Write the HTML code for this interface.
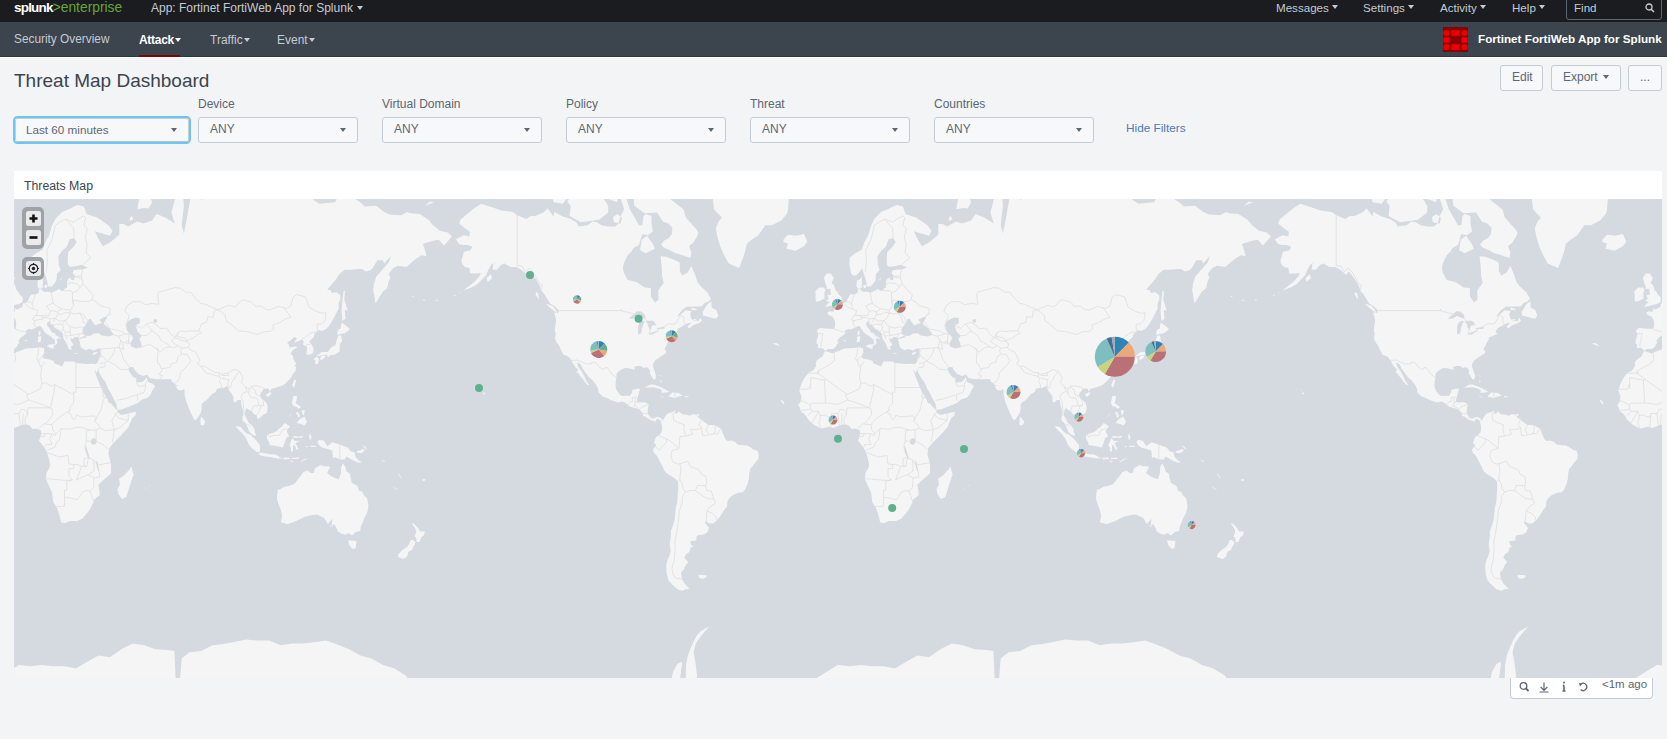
<!DOCTYPE html>
<html><head><meta charset="utf-8">
<style>
*{box-sizing:border-box}
html,body{margin:0;padding:0;width:1667px;height:739px;overflow:hidden;background:#f2f4f5;font-family:"Liberation Sans",sans-serif}
.a{position:absolute;white-space:nowrap;line-height:1}
#top{position:absolute;left:0;top:0;width:1667px;height:22px;background:#1a1c20}
#nav{position:absolute;left:0;top:22px;width:1667px;height:35px;background:#3c444d;border-bottom:1px solid #30363d}
#navw{position:absolute;left:0;top:57px;width:1667px;height:1px;background:#fff}
.tri{display:inline-block;width:0;height:0;border-left:3.5px solid transparent;border-right:3.5px solid transparent;border-top:4.5px solid currentColor;vertical-align:middle}
.dd{position:absolute;top:117px;width:160px;height:26px;border:1px solid #c3cbd4;border-radius:3px;background:#f7f8fa;color:#5c6773;font-size:12px}
.dd span{position:absolute;left:11px;top:5px;line-height:1}
.dd i{position:absolute;right:11px;top:10px;width:0;height:0;border-left:3.5px solid transparent;border-right:3.5px solid transparent;border-top:4.5px solid #5c6773}
.lbl{position:absolute;top:98px;font-size:12px;color:#5c6773;line-height:1}
.btn{position:absolute;top:65px;height:26px;border:1px solid #c3cbd4;border-radius:3px;background:#f7f8fa;color:#5c6773;font-size:12px}
.btn span{position:absolute;top:5px;line-height:1}
#panel{position:absolute;left:14px;top:171px;width:1648px;height:28px;background:#fff}
#map{position:absolute;left:14px;top:199px;width:1648px;height:479px;overflow:hidden;background:#d5dae0}
.ctl{position:absolute;left:8px;width:22px;background:#9fa3a7;border-radius:5px}
.cb{position:absolute;left:4px;width:15px;height:15px;background:#ebebeb;border-radius:2.5px}
</style></head><body>
<div id="top"></div>
<div id="nav"></div><div id="navw"></div>
<div id="panel"></div>
<div class="a" style="left:14px;top:1px;font-size:13.5px;font-weight:bold;color:#fff;letter-spacing:-0.8px">splunk<span style="font-size:13.8px;color:#65a637;font-weight:normal;letter-spacing:0px">&gt;enterprise</span></div>
<div class="a" style="left:151px;top:2px;font-size:12px;color:#c3cbd4">App: Fortinet FortiWeb App for Splunk <span class="tri" style="margin-left:1px;margin-top:-2px"></span></div>
<div class="a" style="left:1276px;top:1.5px;font-size:11.6px;color:#c3cbd4">Messages <span class="tri" style="margin-top:-2px"></span></div>
<div class="a" style="left:1363px;top:1.5px;font-size:11.6px;color:#c3cbd4">Settings <span class="tri" style="margin-top:-2px"></span></div>
<div class="a" style="left:1440px;top:1.5px;font-size:11.6px;color:#c3cbd4">Activity <span class="tri" style="margin-top:-2px"></span></div>
<div class="a" style="left:1512px;top:1.5px;font-size:11.6px;color:#c3cbd4">Help <span class="tri" style="margin-top:-2px"></span></div>
<div style="position:absolute;left:1566px;top:-6px;width:96px;height:26px;border:1px solid #5c6773;border-radius:3px"></div>
<div class="a" style="left:1574px;top:1.5px;font-size:11.6px;color:#c3cbd4">Find</div>
<svg style="position:absolute;left:1645px;top:3px" width="10" height="10" viewBox="0 0 10 10"><circle cx="4" cy="4" r="3" fill="none" stroke="#c3cbd4" stroke-width="1.3"/><path d="M6.2,6.2L9,9" stroke="#c3cbd4" stroke-width="1.5"/></svg>
<div class="a" style="left:14px;top:34px;font-size:11.85px;color:#c3cbd4">Security Overview</div>
<div class="a" style="left:139px;top:34px;font-size:12px;font-weight:bold;color:#fff;letter-spacing:-0.3px">Attack<span class="tri" style="margin-left:1px;margin-top:-2px"></span></div>
<div style="position:absolute;left:139px;top:55px;width:41px;height:2px;background:#850000"></div>
<div class="a" style="left:210px;top:34px;font-size:12px;color:#c3cbd4">Traffic<span class="tri" style="margin-left:1px;margin-top:-2px"></span></div>
<div class="a" style="left:277px;top:34px;font-size:12px;color:#c3cbd4">Event<span class="tri" style="margin-left:1px;margin-top:-2px"></span></div>
<svg style="position:absolute;left:1443px;top:27px" width="25" height="25" viewBox="0 0 25 25"><rect width="25" height="25" fill="#8a0000"/>
<g fill="#ee0000"><rect x="0.3" y="3.2" width="6" height="5.6" rx="2"/><rect x="8.3" y="3.2" width="8.4" height="5.6"/><rect x="18.5" y="3.2" width="6.2" height="5.6" rx="2"/>
<rect x="0.3" y="10.2" width="6" height="5.6"/><rect x="18.5" y="10.2" width="6.2" height="5.6"/>
<rect x="0.3" y="17.3" width="6" height="5.6" rx="2"/><rect x="8.3" y="17.3" width="8.4" height="5.6"/><rect x="18.5" y="17.3" width="6.2" height="5.6" rx="2"/></g></svg>
<div class="a" style="left:1478px;top:33px;font-size:11.7px;font-weight:bold;color:#fff">Fortinet FortiWeb App for Splunk</div>
<div class="a" style="left:14px;top:71px;font-size:19px;color:#3c444d">Threat Map Dashboard</div>
<div class="btn" style="left:1500px;width:43px"><span style="left:11px">Edit</span></div>
<div class="btn" style="left:1551px;width:70px"><span style="left:11px">Export</span><i style="position:absolute;left:51px;top:9px;width:0;height:0;border-left:3.5px solid transparent;border-right:3.5px solid transparent;border-top:4.5px solid #5c6773"></i></div>
<div class="btn" style="left:1628px;width:34px"><span style="left:11px">...</span></div>
<div style="position:absolute;left:13px;top:115.5px;width:178px;height:28.5px;border:2px solid #6cc6f5;border-radius:4.5px;background:#f7f8fa"><div style="position:absolute;left:0;top:0;right:0;bottom:0;border:1px solid #c8ced6;border-bottom-color:#b9c0c8;border-radius:2.5px"></div></div>
<div class="a" style="left:26px;top:123.5px;font-size:11.7px;color:#5c6773">Last 60 minutes</div>
<i style="position:absolute;left:171px;top:128px;width:0;height:0;border-left:3.5px solid transparent;border-right:3.5px solid transparent;border-top:4.5px solid #5c6773"></i>
<div class="lbl" style="left:198px">Device</div><div class="dd" style="left:198px"><span>ANY</span><i></i></div>
<div class="lbl" style="left:382px">Virtual Domain</div><div class="dd" style="left:382px"><span>ANY</span><i></i></div>
<div class="lbl" style="left:566px">Policy</div><div class="dd" style="left:566px"><span>ANY</span><i></i></div>
<div class="lbl" style="left:750px">Threat</div><div class="dd" style="left:750px"><span>ANY</span><i></i></div>
<div class="lbl" style="left:934px">Countries</div><div class="dd" style="left:934px"><span>ANY</span><i></i></div>
<div class="a" style="left:1126px;top:123px;font-size:11.8px;color:#4e7bb0">Hide Filters</div>
<div class="a" style="left:24px;top:180px;font-size:12.3px;color:#3c444d">Threats Map</div>

<div id="map">
<svg width="1648" height="479" viewBox="0 0 1648 479">
<defs><g id="w"><path d="M-379.9,-144.6 -376.5,-147.3 -378.8,-146.1ZM-146.3,-128.9 -140.6,-128.6 -142.2,-130.0 -146.7,-131.4ZM-147.4,-181.1 -151.3,-182.0 -157.0,-184.0 -162.7,-185.5 -167.9,-188.5 -174.0,-191.1 -177.0,-194.2 -174.0,-198.0 -169.0,-200.7 -166.1,-204.7 -165.6,-211.1 -169.5,-215.3 -175.2,-217.2 -180.9,-226.2 -193.4,-225.5 -203.6,-233.0 -204.8,-243.9 -191.1,-254.1 -175.2,-246.2 -163.8,-236.6 -154.7,-229.6 -153.6,-226.2 -152.4,-221.6 -141.0,-208.7 -139.5,-205.8 -140.6,-203.0 -144.5,-196.4 -149.0,-192.6 -146.7,-187.0ZM-177.4,-58.3 -176.5,-59.0 -177.0,-55.8 -177.9,-57.0ZM-177.0,-63.3 -175.2,-62.6 -179.3,-62.8ZM-284.4,-236.6 -275.3,-235.1 -268.4,-243.9 -273.0,-258.3 -284.4,-255.8 -286.6,-243.9ZM-193.3,-51.0 -187.5,-54.2 -184.7,-54.3 -178.6,-52.3 -172.2,-49.1 -168.6,-46.9 -172.4,-46.3 -176.8,-46.0 -176.1,-48.2 -178.6,-50.1 -184.3,-51.6 -188.8,-51.3 -193.1,-51.1ZM-99.0,-170.8 -109.2,-175.3 -113.8,-183.5 -117.6,-192.1 -120.6,-201.8 -122.2,-210.5 -119.4,-217.2 -116.0,-221.0 -124.0,-229.6 -125.1,-240.2 -129.7,-260.0 -136.5,-273.4 -154.7,-278.2 -163.8,-293.6 -147.9,-324.3 -125.1,-346.8 -91.0,-373.9 -56.9,-373.9 -34.1,-338.8 -40.9,-293.6 -45.5,-264.3 -48.9,-243.9 -49.6,-235.1 -50.0,-228.9 -51.2,-224.9 -56.9,-218.4 -66.0,-213.5 -72.8,-213.5 -79.6,-203.5 -86.5,-199.1 -91.0,-195.3 -93.3,-186.0 -96.7,-176.3ZM-354.9,-46.9 -352.6,-45.2 -354.0,-43.8 -354.9,-45.7ZM-169.5,-42.6 -165.6,-46.2 -159.2,-45.7 -155.4,-43.1 -160.4,-42.1 -163.3,-40.9 -169.0,-42.1ZM-54.6,-199.1 -50.0,-204.1 -42.1,-203.0 -34.1,-204.7 -30.7,-197.4 -34.1,-192.6 -42.5,-188.0 -51.6,-190.0 -50.0,-195.3 -54.6,-196.9ZM-178.1,-42.6 -173.4,-41.9 -174.7,-41.2 -177.9,-42.1ZM-224.1,-216.6 -217.3,-215.3 -216.1,-221.0 -220.7,-224.9 -225.2,-221.6ZM-350.3,-156.9 -345.8,-160.7 -347.4,-164.6 -351.5,-160.7ZM-356.7,-235.1 -345.8,-231.6 -336.7,-228.2 -325.3,-226.9 -320.8,-223.6 -311.7,-219.7 -307.1,-222.9 -302.6,-222.9 -294.6,-226.2 -290.3,-230.3 -284.4,-222.3 -283.7,-226.9 -275.3,-222.3 -267.3,-219.7 -261.6,-216.6 -259.3,-212.3 -250.2,-213.5 -245.7,-217.2 -241.1,-216.6 -236.6,-213.5 -229.8,-212.3 -222.9,-212.3 -219.5,-215.3 -217.3,-222.9 -213.8,-229.6 -217.3,-240.2 -211.6,-240.2 -208.2,-229.6 -202.5,-219.7 -199.1,-213.5 -195.7,-213.5 -194.5,-222.9 -192.2,-224.9 -186.5,-222.9 -186.5,-214.7 -185.0,-207.6 -190.0,-203.5 -195.7,-204.7 -199.1,-193.7 -204.8,-190.6 -206.3,-187.5 -210.4,-183.5 -213.8,-176.3 -215.2,-171.7 -214.3,-166.3 -210.4,-159.0 -201.3,-156.5 -193.4,-151.2 -187.2,-150.8 -187.0,-142.3 -183.1,-136.4 -179.5,-139.0 -179.7,-148.5 -174.3,-155.7 -175.9,-162.8 -176.3,-171.7 -177.4,-182.5 -172.0,-182.0 -163.8,-179.1 -158.3,-176.3 -158.1,-167.2 -155.6,-163.3 -150.2,-166.3 -146.7,-173.0 -143.3,-165.0 -140.4,-156.5 -137.0,-152.4 -130.8,-146.5 -126.9,-140.1 -129.7,-137.1 -133.1,-136.0 -136.5,-132.4 -144.5,-132.4 -151.3,-132.1 -155.8,-128.9 -161.1,-122.1 -158.1,-123.4 -152.4,-128.6 -146.3,-127.9 -147.9,-124.8 -147.0,-121.4 -145.6,-118.8 -139.9,-117.2 -137.6,-121.1 -136.0,-118.1 -138.8,-115.9 -144.7,-113.6 -149.0,-110.4 -150.6,-112.3 -146.7,-115.9 -150.2,-115.5 -152.7,-114.2 -157.0,-111.7 -159.7,-110.4 -160.8,-108.2 -161.3,-106.4 -159.2,-104.9 -162.0,-103.9 -163.8,-103.0 -168.3,-101.2 -168.3,-98.9 -170.4,-96.2 -171.1,-94.2 -172.7,-91.3 -173.6,-90.4 -172.0,-87.6 -171.8,-85.7 -174.0,-84.3 -177.2,-82.3 -180.2,-80.2 -183.1,-78.0 -184.7,-75.6 -185.2,-72.7 -183.4,-67.4 -182.0,-63.3 -182.2,-60.8 -183.1,-59.3 -184.5,-59.5 -186.1,-61.8 -188.1,-65.4 -188.1,-68.5 -190.4,-71.3 -192.2,-71.6 -194.3,-70.8 -196.8,-72.7 -200.2,-72.9 -203.8,-72.1 -202.9,-69.2 -205.9,-69.5 -209.3,-70.6 -213.4,-70.8 -215.7,-69.8 -219.5,-67.2 -221.4,-65.1 -221.6,-61.3 -222.3,-57.5 -222.5,-52.1 -221.4,-48.9 -218.6,-44.5 -215.7,-42.8 -210.4,-43.1 -208.2,-42.8 -205.9,-46.0 -205.7,-48.9 -201.3,-50.1 -197.9,-50.1 -198.8,-47.2 -199.5,-44.0 -200.7,-40.4 -201.3,-37.4 -199.1,-36.4 -195.7,-36.6 -192.2,-36.4 -189.3,-34.5 -190.0,-31.0 -190.4,-26.6 -190.2,-24.9 -187.7,-21.7 -185.4,-20.1 -183.1,-21.0 -180.9,-21.9 -178.6,-21.5 -176.1,-19.9 -176.3,-17.1 -178.4,-18.9 -180.9,-20.3 -182.7,-17.1 -185.4,-18.3 -188.8,-18.9 -190.4,-20.6 -192.7,-22.4 -195.2,-22.9 -195.0,-25.4 -196.8,-27.5 -199.3,-29.8 -201.3,-30.3 -204.3,-31.0 -208.2,-32.2 -210.0,-33.6 -212.7,-36.4 -216.1,-37.4 -219.5,-36.2 -222.9,-37.4 -227.3,-38.8 -230.9,-40.9 -235.5,-42.4 -239.6,-46.5 -240.0,-50.1 -242.1,-54.3 -245.7,-58.8 -248.9,-61.3 -252.1,-65.9 -255.5,-70.3 -257.5,-74.8 -260.9,-76.4 -259.8,-72.1 -256.6,-67.7 -253.7,-62.6 -251.4,-57.5 -248.9,-54.3 -250.2,-53.5 -253.7,-57.5 -255.3,-60.0 -258.2,-63.3 -259.8,-65.9 -261.6,-66.4 -260.0,-69.0 -263.4,-72.7 -265.5,-76.4 -266.4,-78.3 -269.4,-82.1 -271.9,-83.4 -274.4,-84.0 -277.3,-89.3 -278.7,-93.0 -281.4,-96.2 -283.0,-100.6 -282.3,-105.5 -283.2,-108.6 -281.9,-118.8 -283.7,-126.2 -279.8,-125.8 -279.4,-128.2 -280.5,-130.0 -283.9,-132.8 -287.8,-135.3 -290.7,-139.7 -293.5,-144.6 -296.4,-147.7 -298.0,-152.4 -301.4,-158.6 -305.3,-163.7 -308.3,-167.2 -311.0,-163.7 -313.9,-166.7 -317.8,-169.9 -321.9,-171.7 -327.6,-171.7 -333.3,-175.3 -336.7,-174.0 -341.2,-169.0 -345.3,-169.4 -344.7,-174.9 -341.2,-177.2 -346.9,-174.0 -349.9,-168.5 -351.5,-164.1 -356.0,-159.4 -360.6,-154.5 -366.3,-151.2 -372.0,-149.3 -374.9,-148.1 -369.7,-152.4 -364.0,-156.5 -358.3,-162.8 -357.2,-165.9 -361.7,-165.4 -367.9,-165.4 -368.6,-170.8 -373.1,-171.7 -375.8,-174.9 -376.5,-178.6 -374.9,-183.5 -374.2,-187.0 -367.4,-188.5 -365.8,-192.1 -370.4,-193.7 -375.4,-193.7 -378.8,-194.8 -382.2,-199.6 -374.2,-203.5 -368.6,-202.4 -368.1,-207.0 -373.1,-210.5 -378.8,-215.3 -377.6,-219.1 -370.8,-224.9 -364.0,-230.3ZM-134.9,-123.4 -126.3,-121.1 -121.9,-120.1 -119.7,-123.1 -121.7,-128.9 -126.3,-131.0 -126.7,-137.5 -130.8,-134.2 -135.4,-126.9ZM-146.5,-120.1 -141.0,-118.1 -142.2,-119.8ZM-230.9,-240.2 -220.7,-236.6 -219.5,-247.8 -225.2,-255.8 -232.0,-249.3ZM-152.9,-42.8 -149.2,-42.6 -149.7,-41.6 -152.9,-41.6ZM-299.2,-139.0 -302.6,-144.6 -301.4,-146.9 -299.6,-145.0ZM-217.3,-242.4 -207.0,-243.9 -205.9,-255.8 -216.1,-255.8ZM-183.1,-190.0 -192.2,-185.5 -197.9,-188.5 -196.3,-199.1 -191.1,-203.0 -185.4,-195.3ZM-280.5,-125.8 -284.4,-128.2 -292.1,-134.6 -290.1,-134.6 -285.5,-132.8 -282.1,-128.9ZM-229.8,-226.2 -238.9,-219.1 -257.1,-216.6 -268.4,-222.9 -267.3,-233.0 -270.7,-237.3 -261.6,-250.1 -245.7,-247.8 -236.6,-243.9 -229.8,-233.0ZM406.1,-233.0 415.2,-236.6 410.6,-237.3ZM-13.4,-87.3 -15.5,-82.3 -17.3,-81.2 -21.2,-78.3 -22.3,-75.6 -21.8,-72.7 -25.0,-68.2 -29.3,-66.1 -33.0,-61.5 -36.4,-55.5 -38.7,-48.4 -36.4,-41.9 -37.5,-36.9 -39.8,-33.8 -38.2,-31.0 -38.0,-28.2 -34.1,-25.2 -31.2,-21.7 -30.0,-19.4 -26.2,-15.7 -24.6,-14.4 -17.1,-10.0 -9.1,-12.1 -4.5,-10.9 -0.5,-12.5 2.7,-13.9 7.7,-14.6 11.4,-12.8 13.6,-9.8 17.1,-10.2 20.5,-9.1 21.6,-8.9 22.3,-5.7 21.2,-0.9 19.8,1.6 23.9,6.8 26.8,10.9 28.0,13.7 30.0,20.1 31.2,26.3 30.5,28.9 27.3,34.5 27.5,35.0 26.8,40.0 29.6,46.5 33.0,53.5 34.4,63.8 37.5,67.9 39.8,74.2 41.2,79.1 42.1,83.4 45.5,84.5 51.2,82.3 58.2,82.3 63.5,79.6 70.5,71.3 74.4,63.8 74.8,61.3 80.8,56.3 80.3,51.3 79.2,46.0 84.2,41.4 92.1,34.5 92.1,25.2 89.4,15.5 90.3,9.1 94.4,4.1 103.1,-4.6 109.2,-11.4 113.3,-20.6 116.7,-23.8 116.7,-27.0 102.4,-23.8 98.3,-26.6 98.5,-28.9 92.1,-35.2 89.9,-35.9 87.6,-41.6 84.6,-45.5 81.9,-51.3 79.9,-56.5 77.3,-62.8 76.9,-64.6 74.2,-71.3 73.5,-75.0 68.0,-74.8 56.9,-75.8 54.6,-77.2 45.5,-77.2 43.2,-72.4 35.3,-75.6 34.6,-78.0 30.0,-79.3 25.0,-80.4 23.0,-82.1 25.3,-85.7 25.0,-91.0 23.2,-90.2 22.5,-91.6 15.9,-90.7 6.8,-90.2 -1.4,-87.0 -5.0,-85.4 -12.1,-87.6ZM-35.9,-66.7 -35.0,-66.4 -35.5,-65.9ZM-139.5,136.0 -131.9,136.4 -131.3,138.2 -135.4,140.1 -139.2,139.0ZM112.2,27.5 114.7,35.7 113.3,39.3 110.6,47.7 107.2,58.5 102.8,60.3 99.4,55.0 98.5,50.1 101.0,46.0 100.1,40.0 105.3,36.4 109.0,32.2 110.6,30.8ZM-176.1,-19.6 -174.7,-18.7 -173.4,-21.5 -171.8,-23.8 -170.2,-25.2 -168.8,-25.9 -166.1,-26.6 -164.3,-27.5 -162.2,-28.4 -162.9,-26.3 -162.9,-24.9 -161.3,-25.6 -159.7,-26.3 -159.2,-28.0 -158.1,-26.3 -155.4,-24.3 -152.4,-24.3 -147.9,-23.1 -145.6,-24.5 -141.7,-24.3 -140.8,-22.9 -138.8,-20.6 -136.5,-19.4 -134.2,-17.1 -131.9,-15.5 -129.7,-13.7 -125.1,-13.7 -121.7,-12.8 -118.3,-10.7 -116.5,-9.6 -114.9,-4.6 -113.8,-2.3 -112.6,0.5 -110.3,2.3 -106.9,1.6 -102.4,3.4 -100.6,5.7 -95.5,6.4 -91.0,6.6 -87.6,8.4 -84.2,10.9 -80.3,12.1 -79.2,16.4 -79.9,20.6 -83.0,24.0 -85.3,27.5 -87.6,29.8 -88.7,34.5 -89.2,40.4 -90.5,45.2 -92.8,50.8 -95.5,53.8 -98.3,53.8 -101.7,54.8 -105.8,56.8 -109.2,60.0 -110.6,62.6 -111.0,67.7 -113.8,71.1 -116.0,74.8 -119.4,79.6 -121.7,82.3 -124.9,84.8 -127.9,84.8 -130.8,83.4 -132.9,82.3 -132.9,84.3 -130.1,87.6 -129.0,89.3 -130.8,93.6 -134.2,95.6 -139.9,96.2 -141.5,98.0 -141.7,101.8 -147.9,102.4 -146.7,106.4 -144.7,107.6 -147.4,108.6 -148.6,113.3 -152.0,115.5 -153.8,118.8 -149.7,123.1 -152.4,126.5 -154.2,131.0 -157.0,133.5 -156.1,140.1 -153.6,144.6 -148.3,150.1 -152.4,150.5 -155.8,152.0 -160.4,150.5 -164.9,146.5 -169.5,141.6 -171.3,135.3 -171.8,126.5 -170.6,121.4 -168.3,116.5 -167.2,111.7 -168.3,107.0 -167.9,102.4 -167.2,98.0 -167.2,92.1 -164.9,86.5 -163.3,81.0 -162.7,74.2 -162.2,69.0 -160.6,62.6 -160.2,55.3 -159.7,48.9 -159.9,42.8 -162.7,40.0 -166.1,37.8 -170.6,35.0 -173.6,31.9 -175.6,27.5 -178.6,21.7 -180.9,17.1 -184.3,13.7 -185.0,10.7 -182.7,7.7 -182.0,5.5 -184.0,4.6 -183.1,1.1 -182.0,-1.8 -179.5,-3.4 -177.0,-5.9 -175.9,-9.1 -176.1,-13.7 -177.0,-16.4ZM-140.8,-24.7 -138.5,-24.7 -138.8,-23.1 -140.8,-23.1ZM19.6,-103.6 19.8,-107.3 21.4,-108.6 21.6,-105.5 20.9,-103.6ZM53.5,-85.9 59.8,-85.7 56.9,-85.1 53.7,-85.7ZM73.5,-84.5 74.8,-86.2 78.7,-87.0 77.3,-85.1 75.1,-84.0ZM89.4,-213.5 78.5,-221.0 67.6,-224.9 64.8,-232.3 58.7,-233.7 53.5,-231.6 49.8,-229.6 43.0,-226.9 36.4,-219.7 33.4,-214.1 30.0,-203.0 26.2,-196.4 23.7,-189.0 17.1,-185.5 11.6,-181.1 11.4,-174.0 13.0,-165.9 14.8,-163.3 18.2,-163.3 21.6,-166.7 24.1,-170.8 25.0,-167.2 27.1,-161.5 28.4,-156.5 29.3,-152.4 32.5,-152.4 35.5,-155.3 37.5,-158.6 38.0,-165.0 41.6,-168.5 39.8,-174.4 39.4,-182.5 43.2,-188.0 47.8,-192.1 50.5,-199.6 55.1,-200.7 57.8,-196.9 54.6,-192.1 49.1,-186.5 48.7,-178.6 48.9,-174.4 50.7,-172.1 56.9,-172.6 62.6,-174.0 68.9,-171.2 63.7,-169.4 59.1,-169.4 54.6,-168.5 53.5,-165.4 55.5,-164.1 55.3,-159.4 54.8,-158.6 52.3,-159.0 51.4,-161.5 48.9,-159.8 47.8,-155.3 48.0,-153.3 48.2,-151.2 45.5,-150.1 44.6,-148.1 42.5,-148.1 39.8,-149.7 36.4,-147.7 32.3,-146.1 28.0,-147.3 25.0,-146.5 24.8,-148.1 23.0,-148.1 22.5,-150.5 23.9,-154.5 23.9,-159.8 24.1,-161.5 21.6,-159.4 18.9,-158.2 18.4,-152.8 19.8,-150.1 20.0,-146.5 18.2,-145.0 15.9,-144.2 12.5,-144.2 10.9,-142.3 9.8,-139.7 8.0,-136.8 5.7,-135.7 3.6,-135.0 3.6,-132.1 0.5,-130.3 -2.7,-129.3 -3.6,-130.7 -4.5,-126.9 -8.0,-127.5 -10.9,-126.2 -9.8,-124.1 -5.7,-122.4 -3.4,-118.8 -2.7,-114.9 -3.4,-110.1 -8.6,-110.0 -13.6,-110.4 -18.0,-111.1 -21.2,-108.2 -20.0,-105.5 -19.8,-102.7 -21.4,-98.0 -21.6,-95.6 -20.0,-94.2 -20.2,-90.7 -18.0,-90.7 -14.6,-90.2 -13.6,-88.5 -12.3,-88.2 -10.0,-89.9 -5.0,-89.9 -1.8,-92.4 -1.1,-94.5 0.5,-95.9 -0.7,-98.0 2.0,-101.5 5.0,-103.6 7.3,-105.2 7.1,-108.6 10.2,-109.8 12.3,-109.2 16.6,-110.7 20.2,-113.0 22.3,-112.0 23.4,-110.1 25.3,-107.0 28.0,-104.6 30.7,-103.0 32.3,-101.8 34.1,-100.0 35.7,-99.4 35.9,-95.0 35.5,-93.6 36.6,-93.6 37.8,-95.0 38.9,-96.5 37.5,-98.6 39.1,-100.9 40.9,-100.0 42.1,-99.7 40.9,-101.2 38.4,-102.7 36.4,-103.9 36.2,-105.5 33.0,-106.4 30.9,-110.1 28.2,-113.3 28.0,-115.9 29.6,-117.2 31.4,-116.8 31.6,-114.2 34.1,-114.6 34.8,-112.3 37.3,-110.1 40.0,-108.6 42.1,-106.7 44.1,-104.9 44.1,-102.4 44.4,-100.6 45.7,-98.3 47.1,-96.5 48.0,-94.5 49.1,-91.6 49.6,-90.2 51.2,-89.0 52.6,-89.3 51.9,-92.1 53.5,-93.0 54.6,-94.2 52.1,-97.4 51.4,-100.9 54.1,-99.7 55.3,-101.8 58.9,-101.8 60.3,-100.3 63.7,-102.1 66.0,-103.0 68.0,-101.5 62.6,-100.3 59.8,-99.4 61.0,-96.5 61.0,-94.7 62.1,-91.3 64.2,-89.9 67.1,-88.5 69.6,-89.9 72.3,-89.3 75.1,-88.2 78.7,-90.2 81.9,-90.2 81.4,-87.9 81.7,-85.7 80.8,-82.1 79.6,-79.1 78.5,-75.8 76.2,-74.5 73.5,-75.0 73.9,-71.6 74.6,-70.0 77.8,-65.9 79.4,-70.3 80.1,-66.4 83.0,-61.3 86.5,-56.5 89.2,-50.1 92.1,-45.2 95.1,-39.3 97.4,-35.0 98.5,-29.1 102.4,-29.4 110.3,-32.2 118.8,-35.9 123.1,-39.3 129.0,-41.4 131.5,-44.0 133.1,-47.7 136.0,-52.6 133.3,-55.3 129.7,-56.3 128.3,-58.5 127.9,-62.1 126.9,-60.3 123.8,-57.0 119.4,-56.3 117.2,-57.0 117.4,-61.3 116.0,-60.8 114.2,-61.8 112.6,-63.8 110.3,-67.2 109.2,-70.3 110.6,-71.6 114.4,-71.9 115.6,-68.7 119.4,-64.9 124.0,-62.8 128.1,-64.3 130.4,-60.8 137.9,-59.5 145.6,-59.5 151.5,-59.8 153.1,-57.0 155.8,-55.0 157.4,-53.3 160.2,-53.5 156.7,-52.1 159.2,-48.9 162.2,-48.4 165.2,-49.9 165.6,-47.2 165.6,-44.0 166.8,-39.3 167.9,-35.7 169.7,-31.0 171.3,-27.0 173.4,-22.9 174.9,-19.6 176.3,-18.5 177.9,-20.1 180.4,-23.6 181.8,-26.3 182.7,-30.1 182.5,-34.5 184.3,-36.6 187.2,-38.3 189.5,-40.9 193.1,-44.8 196.8,-46.9 197.9,-50.1 201.3,-50.8 204.8,-51.1 208.2,-52.8 209.1,-51.1 210.0,-48.2 212.7,-45.2 214.5,-41.6 214.5,-37.1 216.8,-36.4 218.9,-38.8 221.8,-38.8 222.3,-34.5 223.6,-29.8 224.3,-26.3 223.6,-21.7 223.6,-18.3 226.4,-15.7 228.2,-12.3 230.5,-6.8 233.2,-4.3 235.5,-3.0 237.3,-3.2 235.7,-6.8 235.2,-10.2 232.7,-13.9 229.8,-15.7 228.2,-19.4 225.7,-23.8 226.6,-28.7 227.5,-30.8 229.8,-29.1 233.0,-27.5 234.6,-24.7 237.7,-23.8 238.4,-19.6 242.3,-21.7 243.7,-23.8 247.7,-25.9 248.4,-28.7 248.7,-31.7 247.5,-35.7 246.2,-37.1 243.0,-40.4 240.7,-43.6 242.5,-46.9 244.6,-49.6 246.8,-50.3 249.8,-50.1 250.9,-47.1 252.5,-50.1 255.9,-50.8 259.8,-52.1 262.8,-53.0 265.5,-54.5 268.7,-57.5 272.1,-61.3 273.7,-64.6 276.4,-67.7 277.3,-71.6 275.3,-73.4 277.3,-74.8 275.0,-78.3 273.7,-83.2 271.4,-85.1 273.7,-88.2 276.4,-90.2 278.9,-91.6 276.2,-92.4 273.0,-91.9 270.7,-91.3 269.8,-94.2 267.8,-96.5 269.6,-97.1 271.9,-98.9 275.3,-101.8 278.0,-100.9 276.4,-98.0 275.7,-95.9 278.2,-97.4 282.6,-99.1 284.8,-97.7 283.9,-94.2 286.2,-93.0 288.0,-91.9 287.8,-87.9 287.3,-84.5 290.1,-84.0 293.5,-85.4 294.6,-87.9 294.4,-90.7 292.1,-95.3 290.1,-97.4 292.1,-99.4 295.1,-102.1 295.3,-104.9 297.3,-106.4 300.1,-108.9 303.0,-107.9 307.4,-110.1 310.5,-113.6 314.4,-119.8 316.9,-124.8 319.6,-130.0 319.6,-135.3 321.5,-139.7 321.2,-143.5 317.4,-146.5 312.8,-145.8 311.7,-148.5 308.3,-149.3 312.8,-154.5 316.2,-158.6 320.8,-165.0 325.8,-169.0 332.1,-169.0 339.0,-169.9 343.1,-169.9 346.9,-167.2 351.5,-168.5 353.8,-170.8 358.3,-178.6 364.0,-178.6 365.1,-175.3 372.0,-183.0 369.7,-176.3 366.3,-172.6 357.2,-162.0 354.9,-154.5 354.2,-148.5 356.5,-135.3 360.6,-142.0 364.0,-147.3 368.1,-150.5 369.2,-155.7 371.3,-161.5 369.7,-165.0 374.2,-170.8 378.8,-173.0 387.4,-171.7 392.4,-176.3 397.0,-180.1 402.7,-183.5 407.5,-182.5 406.1,-188.5 403.8,-194.8 408.4,-196.4 414.1,-198.0 419.7,-199.1 425.0,-193.2 427.7,-196.4 432.9,-202.4 428.8,-206.4 420.9,-208.1 414.1,-213.5 409.5,-219.1 400.4,-224.9 391.3,-225.5 387.9,-226.9 382.2,-223.6 370.8,-224.2 365.1,-226.9 357.2,-233.0 345.8,-232.3 341.2,-236.6 332.1,-242.4 320.8,-246.2 316.2,-236.6 300.3,-235.1 294.6,-238.7 292.3,-247.8 286.6,-251.7 279.8,-247.8 268.4,-251.7 257.1,-253.3 250.2,-254.1 241.1,-250.1 238.9,-283.1 227.5,-273.4 204.8,-268.8 195.7,-260.0 186.5,-249.3 183.1,-238.7 177.4,-242.4 171.8,-242.4 169.5,-229.6 167.2,-216.6 164.9,-205.2 162.7,-213.5 164.9,-233.0 163.8,-246.2 158.1,-247.8 152.4,-226.2 155.8,-215.3 146.7,-221.0 137.6,-224.9 133.1,-218.4 124.0,-215.3 118.3,-217.2 109.2,-212.3 104.6,-214.7 100.3,-214.7 100.3,-204.1 91.0,-196.4 83.9,-192.6 79.9,-199.1 75.8,-207.6 91.0,-203.0 93.5,-208.1ZM22.3,-152.4 24.6,-152.8 23.9,-150.5ZM-13.0,-132.1 -8.0,-132.8 -2.3,-134.2 3.2,-136.0 3.9,-141.2 0.7,-144.2 -0.5,-146.9 -2.7,-148.9 -3.6,-152.8 -4.8,-154.5 -6.4,-155.7 -4.1,-160.7 -7.3,-165.4 -11.4,-165.4 -14.1,-160.7 -12.7,-155.7 -11.1,-151.6 -11.6,-149.7 -7.3,-150.1 -7.7,-147.7 -6.8,-144.2 -10.7,-143.8 -9.3,-140.1 -11.8,-137.9 -8.0,-136.8 -10.2,-135.3ZM41.2,-159.4 43.2,-162.0 42.1,-158.2ZM-13.6,-139.7 -13.6,-146.1 -12.5,-148.9 -14.1,-151.2 -18.7,-151.2 -22.8,-147.3 -22.3,-143.8 -22.5,-139.0 -21.6,-137.1 -18.2,-137.9 -14.6,-139.7ZM110.3,-219.7 112.6,-222.9 114.4,-219.7 111.5,-217.8ZM5.2,-98.3 7.7,-99.1 7.3,-97.4ZM118.3,-229.6 125.1,-230.9 129.7,-230.3 133.1,-236.6 128.5,-249.3 122.8,-247.8 119.4,-236.6ZM18.7,-96.8 19.1,-102.1 22.3,-102.7 21.8,-97.4 20.5,-96.5ZM28.2,-93.0 30.5,-94.2 35.5,-94.5 34.4,-91.0 34.4,-89.9 32.5,-90.4 28.2,-92.4ZM25.0,-153.3 28.7,-154.5 28.0,-151.2 26.2,-150.5ZM-402.2,-137.9 -399.3,-138.6 -401.5,-139.3ZM-397.0,-139.0 -392.4,-140.5 -394.7,-139.7ZM-384.5,-142.0 -381.1,-144.6 -384.0,-143.5ZM403.4,-138.6 406.8,-137.5 404.9,-139.3ZM392.4,-142.3 394.7,-141.2 394.0,-142.7ZM-155.8,222.9 -160.4,224.9 -164.9,233.0 -168.3,247.8 -159.2,247.8 -157.0,233.0ZM-22.8,240.2 -11.4,233.0 0.0,226.2 11.4,227.5 22.8,226.2 34.1,227.5 45.5,227.5 56.9,229.6 68.2,222.9 79.6,216.6 91.0,218.4 102.4,210.5 113.8,204.7 125.1,206.4 136.5,210.5 147.9,211.1 155.4,212.3 157.0,247.8 160.4,247.8 162.7,219.7 170.6,213.5 182.0,212.3 193.4,206.4 204.8,205.2 216.1,203.0 227.5,200.7 238.9,201.8 250.2,201.8 261.6,206.4 273.0,204.7 284.4,204.7 295.8,203.5 307.1,201.8 318.5,205.8 329.9,210.5 341.2,216.6 352.6,219.7 364.0,226.2 375.4,229.6 386.8,236.6 391.3,243.9 391.3,317.6 -22.8,317.6ZM-128.5,187.5 -133.1,190.0 -137.6,192.6 -141.0,196.4 -143.8,201.8 -146.7,207.6 -150.2,216.6 -152.0,226.2 -152.4,251.7 -142.2,251.7 -141.0,236.6 -142.2,226.2 -144.5,213.5 -142.2,204.7 -135.4,195.3ZM258.9,50.8 260.7,50.6 265.5,47.9 269.8,47.2 275.3,45.2 278.0,41.6 281.2,37.6 284.4,33.3 288.7,31.7 291.7,34.3 294.8,34.3 295.8,29.8 297.6,28.4 301.7,26.3 304.8,27.5 309.2,27.5 311.2,28.2 308.3,33.6 308.3,34.5 312.8,37.6 316.2,39.3 319.9,40.4 321.9,34.5 322.1,28.7 324.2,24.5 326.5,28.7 327.6,32.9 330.6,34.5 331.7,39.0 332.8,44.0 334.0,44.8 338.5,47.2 340.1,52.1 343.1,52.8 344.7,56.3 348.1,59.5 349.2,65.1 349.4,67.9 348.1,74.2 345.3,79.3 344.2,82.1 341.7,87.9 341.2,92.1 336.7,93.3 333.1,96.8 329.6,94.2 326.5,95.9 321.9,94.7 318.5,92.1 317.8,89.6 315.1,85.1 313.5,86.8 312.8,85.7 313.5,79.6 309.4,84.8 308.5,84.8 305.3,79.1 298.0,75.6 293.5,76.1 286.6,77.7 282.1,79.6 277.3,82.1 268.4,85.4 268.2,85.1 261.9,83.4 263.2,76.9 261.6,70.3 260.7,68.5 258.2,61.3 258.0,57.5ZM-65.5,-95.3 -61.7,-95.9 -58.0,-93.0 -59.1,-92.7ZM260.5,18.5 263.2,19.2 262.1,20.1ZM248.0,-3.4 249.3,-4.6 253.7,-5.7 257.1,-7.3 260.5,-10.5 262.8,-12.1 265.7,-15.7 267.8,-14.6 271.2,-12.1 268.4,-9.8 267.8,-6.8 270.3,-2.3 267.3,-1.1 266.2,2.3 265.0,5.7 263.9,8.7 260.5,8.0 257.1,7.1 253.7,6.8 250.7,6.4 250.2,3.4 248.0,0.0ZM286.4,7.1 289.4,7.7 287.3,8.7ZM-57.3,-39.5 -55.3,-38.3 -53.5,-35.2 -54.1,-34.3 -56.4,-36.9ZM403.4,40.4 406.3,40.2 405.4,42.1 403.6,41.9ZM272.5,19.2 279.8,18.7 279.4,20.1 273.0,20.3ZM247.1,-44.5 251.4,-46.7 252.5,-45.5 249.6,-42.1 247.3,-42.8ZM290.1,-4.3 291.2,-5.0 292.6,-1.1 291.0,1.8 290.3,-1.1ZM318.5,-103.6 321.2,-104.9 325.8,-105.5 331.0,-109.5 328.7,-111.7 322.8,-116.2 321.5,-110.1 319.2,-109.2 318.3,-106.4ZM297.8,-82.2 301.4,-83.2 308.0,-84.0 308.9,-81.0 311.4,-83.7 315.8,-84.0 318.0,-85.7 320.5,-87.0 320.8,-94.5 323.1,-98.0 321.9,-103.6 319.2,-103.0 318.5,-100.9 317.8,-99.1 316.2,-93.3 312.4,-91.9 311.0,-89.9 308.9,-86.8 302.8,-86.8 299.2,-84.0 297.8,-83.2ZM239.3,15.5 241.4,13.7 246.4,14.4 251.4,15.5 256.2,15.7 260.3,17.8 260.5,19.9 254.8,18.9 246.8,17.8 242.3,16.9 240.0,15.7ZM310.5,87.0 314.2,87.0 312.8,88.2ZM-363.5,-51.8 -362.4,-51.8 -363.1,-51.1ZM294.8,-80.4 297.8,-82.1 300.1,-79.6 299.2,-75.3 297.1,-74.2 296.2,-75.6 296.4,-78.5 295.3,-79.1ZM263.9,18.9 270.7,18.7 270.7,20.1 265.0,20.6ZM273.0,-36.9 274.4,-42.8 278.0,-42.8 277.6,-39.3 276.6,-35.9 282.1,-31.7 279.8,-29.8 277.1,-32.2 274.4,-32.6 272.8,-35.7ZM-356.5,-48.9 -354.9,-48.6 -355.8,-47.9ZM130.4,46.5 131.5,46.7 130.8,47.7ZM277.6,-16.0 281.0,-19.9 285.5,-22.4 288.0,-16.7 285.5,-13.2 282.1,-14.8 277.6,-15.7ZM278.7,-24.0 281.0,-24.9 280.3,-20.8 278.5,-22.4ZM337.8,12.5 341.2,11.4 344.7,10.2 345.8,11.8 342.4,14.4 337.8,13.7ZM373.1,46.9 377.6,50.1 379.9,52.1 375.4,49.4ZM298.0,3.4 300.3,0.9 304.8,2.0 308.3,7.5 313.5,3.4 320.8,5.9 328.7,8.7 331.7,12.5 335.6,13.7 336.5,18.3 340.1,21.7 343.1,23.6 339.0,23.6 334.4,21.7 327.6,17.8 325.8,20.6 320.8,20.8 316.2,18.5 313.9,19.2 313.3,11.8 307.1,9.8 303.7,8.9 300.3,6.6 298.7,3.4ZM343.1,6.1 346.5,8.0 348.1,10.7 346.9,10.2ZM392.9,83.4 396.5,86.5 399.9,90.2 400.6,92.4 406.1,92.7 404.7,96.8 402.4,98.3 400.4,103.3 397.7,103.3 397.2,98.9 395.4,97.4 397.2,93.6 396.5,90.2 393.6,85.7ZM392.9,100.9 396.3,103.0 395.8,105.5 394.0,108.6 392.9,111.1 389.5,113.0 388.1,117.8 384.5,120.1 378.8,118.1 379.5,115.5 382.9,111.7 388.6,107.6 390.2,104.9 391.5,101.8ZM-360.1,-50.3 -358.8,-50.1 -359.4,-49.4ZM266.6,-18.9 271.9,-24.0 272.5,-25.9 268.4,-20.6ZM277.6,-27.0 280.1,-26.3 278.7,-24.0 277.3,-24.3ZM125.6,48.9 126.9,49.1 126.0,49.9ZM323.1,-118.1 326.5,-119.8 325.8,-128.9 328.7,-128.2 325.3,-139.0 326.0,-147.7 324.6,-147.7 323.5,-139.0 322.6,-128.2 323.1,-121.4ZM282.8,-28.7 286.0,-28.2 284.6,-23.3 283.2,-25.2ZM291.2,6.8 297.6,7.3 295.8,8.2 291.7,8.0ZM301.0,-79.6 302.6,-78.8 306.4,-81.8 306.2,-82.9 303.9,-83.4 301.7,-82.1ZM361.7,20.6 366.3,22.4 365.1,22.9ZM181.5,-14.1 181.5,-18.7 182.0,-22.4 184.7,-19.4 186.3,-16.9 185.0,-14.1 183.4,-13.4ZM271.6,12.8 273.9,12.8 274.1,6.4 275.7,6.4 277.6,10.9 279.6,10.5 276.4,4.3 280.7,2.3 275.3,2.0 273.5,-0.7 275.3,-3.0 279.8,-2.0 283.9,-3.4 283.2,-1.1 273.9,-1.1 272.5,1.1 270.3,6.4 272.1,9.1ZM216.8,-12.8 221.8,-11.8 224.5,-8.4 228.4,-4.8 230.5,-4.6 235.5,0.0 237.7,2.3 241.1,6.8 240.9,13.2 238.0,13.4 232.7,9.1 229.8,5.7 228.0,1.1 225.2,-3.4 221.8,-6.8 218.4,-10.2ZM270.7,21.5 274.8,22.6 273.0,23.6ZM23.9,-305.1 40.9,-321.5 61.4,-317.6 50.0,-293.6 34.1,-283.1ZM273.2,-53.8 275.3,-59.0 277.3,-58.8 275.3,-51.3 274.6,-51.3ZM329.0,101.5 337.4,102.1 336.7,109.2 334.0,110.4 330.3,106.4ZM281.0,23.6 284.4,20.6 289.4,19.2 286.6,21.0 282.6,23.3ZM378.8,34.5 380.6,35.7 382.9,40.4 381.1,38.1Z" fill="#f5f5f5"/><path d="M134.2,-119.1 137.6,-119.8 138.3,-116.8 135.4,-115.9ZM63.7,-105.2 63.5,-107.6 63.5,-109.2 65.3,-112.3 67.6,-115.5 69.8,-119.8 71.7,-120.1 73.9,-116.2 76.2,-113.6 78.5,-114.2 80.8,-115.2 83.0,-115.9 80.3,-119.1 85.3,-121.8 88.5,-122.1 86.9,-119.1 85.3,-116.5 84.9,-114.6 86.0,-113.9 90.3,-110.4 94.6,-104.3 90.3,-102.4 82.6,-103.3 79.9,-105.5 75.1,-105.2 71.0,-102.7 66.2,-103.0ZM106.9,-113.3 109.0,-117.8 112.6,-119.8 116.5,-121.4 120.6,-120.8 121.0,-115.9 116.7,-113.3 118.3,-107.9 120.3,-105.2 122.8,-103.3 120.3,-99.4 122.4,-95.3 122.8,-91.6 117.2,-90.2 113.8,-91.9 112.4,-92.1 111.2,-94.7 114.0,-100.6 114.7,-100.9 111.5,-104.3 109.9,-105.8 108.1,-108.6 107.8,-112.0ZM-189.7,-104.6 -185.4,-104.3 -179.7,-107.9 -183.1,-107.3 -187.7,-105.8ZM-187.5,-108.6 -185.9,-113.3 -182.0,-113.6 -183.1,-116.5 -185.4,-118.1 -191.1,-118.1 -192.2,-116.5 -190.0,-114.9 -189.7,-111.7 -187.7,-109.2ZM77.3,21.7 78.7,24.0 80.3,32.9 79.2,32.2 77.8,27.5 77.1,22.4ZM-199.7,-104.3 -196.8,-105.5 -196.1,-110.1 -194.3,-115.5 -192.9,-117.5 -195.7,-117.8 -199.1,-115.5 -199.7,-111.7 -200.0,-107.0ZM-181.5,-109.5 -173.4,-110.1 -173.6,-112.3 -176.3,-111.4 -180.6,-110.7ZM-209.5,-120.4 -204.8,-120.1 -200.2,-122.8 -192.5,-119.8 -192.9,-123.8 -196.8,-127.2 -200.9,-127.5 -203.8,-124.8ZM66.4,7.5 67.1,7.3 69.4,14.8 70.8,19.4 70.1,19.9 67.1,14.1 66.2,10.2ZM72.3,0.7 75.1,-0.7 77.6,0.7 77.3,4.1 75.1,6.1 72.1,4.6 71.9,2.3Z" fill="#d5dae0"/><path d="M-280.5,-128.2 -216.5,-128.2 -216.5,-129.6 -215.2,-127.2 -211.6,-126.9 -206.6,-125.5 -203.8,-124.8M-192.5,-119.8 -191.3,-118.8 -187.5,-108.6 -189.1,-105.5 -187.7,-104.6 -179.7,-107.9 -180.2,-109.8 -173.6,-112.3 -169.9,-114.9 -162.7,-114.9 -159.2,-120.4 -157.4,-122.9 -155.2,-122.6 -154.2,-121.8 -154.2,-117.2 -152.7,-114.2M-320.8,-223.6 -320.8,-173.0 -316.2,-173.0 -312.8,-167.2 -308.3,-170.8 -303.7,-165.0 -298.0,-154.5 -295.8,-154.1 -296.4,-149.3M-266.4,-78.3 -260.9,-78.8 -252.5,-75.0 -246.2,-75.0 -246.2,-76.4 -242.3,-76.4 -237.7,-70.8 -234.6,-69.0 -233.0,-71.1 -230.7,-71.1 -226.4,-65.1 -221.6,-61.0M-209.8,-33.3 -209.8,-35.2 -207.9,-37.1 -205.7,-37.1 -205.7,-41.2 -202.7,-41.2 -200.9,-42.8M-202.9,-41.2 -202.9,-36.6 -200.7,-36.2M-202.9,-36.6 -203.4,-33.1 -205.0,-31.5M-203.4,-33.1 -199.7,-30.8M-198.6,-29.8 -195.0,-32.2 -189.3,-34.5M-195.0,-25.4 -190.4,-24.9M-188.6,-18.5 -187.9,-21.7M-176.1,-18.0 -175.6,-19.6M-163.1,-45.7 -163.3,-41.6M-162.2,-27.0 -164.9,-25.2 -164.5,-18.7 -159.5,-16.0 -153.6,-14.1 -154.2,-10.2 -153.1,-4.6 -152.2,-2.7M-152.2,-2.7 -158.1,-2.3 -159.0,9.6 -167.2,2.7 -171.1,0.2 -179.5,-3.2M-171.1,0.2 -171.8,3.4 -178.6,11.4 -182.7,7.7M-136.5,-19.4 -137.9,-16.0 -139.2,-13.7 -136.5,-11.4 -138.1,-10.2 -142.9,-9.1 -147.4,-9.8 -145.6,-4.6 -152.2,-2.7M-129.7,-13.7 -131.9,-9.1 -129.7,-4.6M-122.8,-13.0 -122.8,-8.2 -124.0,-5.2M-117.4,-9.6 -120.3,-5.0 -124.0,-5.2 -127.4,-4.3 -131.9,-3.4 -135.4,-3.4 -136.5,-11.4M-159.0,9.6 -165.8,11.8 -167.2,17.1 -165.2,22.9 -160.4,25.2 -158.1,24.9 -157.0,31.0 -157.9,35.7 -158.1,40.4 -159.9,42.6M-158.1,24.9 -150.2,22.4 -147.9,27.5 -138.8,31.0 -136.5,35.7 -131.9,37.6 -131.5,45.2 -132.4,46.9M-158.1,40.4 -155.8,45.2 -154.7,50.1 -152.4,53.3 -147.9,51.6 -142.4,51.8 -140.6,46.5 -132.4,46.9M-142.4,51.8 -136.5,56.3 -131.0,59.8 -124.2,60.3M-132.4,46.9 -131.5,51.6 -126.7,52.3 -124.2,60.3M-124.2,60.3 -122.4,64.3 -127.4,67.7 -131.0,72.1 -131.7,82.3M-131.0,72.1 -126.3,74.2 -121.7,78.3 -121.5,81.5M-152.4,53.3 -155.4,57.5 -155.8,63.8 -158.6,71.6 -159.2,79.6 -160.4,87.9 -161.5,95.0 -163.1,102.4 -162.9,111.7 -163.8,121.4 -166.1,130.0 -164.9,135.3 -162.7,139.0 -155.6,140.5M-4.1,-109.8 1.6,-107.9 7.3,-106.7M-20.2,-105.2 -14.8,-105.2 -15.7,-102.4 -15.9,-98.0 -17.1,-95.0 -16.8,-91.3M5.7,-135.7 9.6,-131.7 13.2,-130.0 14.6,-130.0 18.7,-128.2 17.3,-123.4 15.5,-122.8 13.6,-119.1 15.9,-117.8 15.0,-115.2 17.1,-111.1M7.7,-136.8 11.4,-136.8 13.6,-134.6 14.6,-130.0M13.6,-134.6 14.1,-138.6 16.4,-143.8M19.8,-150.1 22.5,-149.7M32.3,-146.1 33.2,-141.2 34.1,-135.7 27.5,-132.8 31.4,-127.5 29.6,-123.1 23.9,-123.1 21.8,-123.1 17.3,-123.4M34.1,-135.7 37.5,-132.8 42.8,-130.0 51.4,-128.6 54.6,-133.5 53.5,-139.0 53.5,-146.1 51.9,-148.1 44.6,-148.1M31.4,-127.5 34.1,-128.2 38.4,-126.9 42.8,-130.0M21.8,-123.1 23.9,-121.1 27.8,-121.4 31.2,-119.8 36.4,-120.4 38.9,-124.8 38.4,-126.9M15.5,-117.8 19.3,-119.1 23.9,-119.8 23.9,-121.1M31.2,-119.8 30.9,-116.8M38.9,-124.8 42.8,-124.1 46.6,-126.5 51.4,-125.8 51.4,-128.6M36.4,-120.4 39.8,-117.8 43.0,-117.8 46.2,-118.5 48.9,-120.4 51.4,-125.8M34.1,-116.5 36.4,-120.4M34.6,-113.3 37.5,-114.6 43.2,-114.6 44.6,-111.7 43.7,-109.2 42.1,-107.0M43.2,-114.6 46.2,-118.5M43.7,-109.2 46.6,-107.0 51.2,-106.4 51.2,-112.3 48.7,-114.2 46.2,-118.5M51.2,-112.3 56.9,-110.7 61.4,-112.0 65.1,-111.1M46.6,-107.0 45.5,-105.5 46.9,-102.7 47.8,-99.7M46.9,-102.7 52.1,-103.3 59.1,-104.6 60.5,-103.3 59.6,-101.8M51.2,-106.4 52.3,-103.6M59.1,-104.6 62.6,-105.5 63.7,-105.2M51.4,-125.8 55.7,-124.8 60.5,-125.8 64.2,-119.8 64.2,-116.5 67.6,-115.5M60.5,-125.8 63.7,-124.8 67.8,-119.4 68.2,-117.8M53.5,-139.0 61.4,-137.5 69.4,-137.1 72.8,-139.3 78.3,-136.4 80.8,-133.2 86.9,-131.7 91.2,-130.3 91.0,-124.8 87.4,-122.8M54.6,-133.5 53.5,-139.0M53.5,-146.1 58.0,-147.7 61.0,-151.6 64.2,-154.9 71.7,-146.5 74.4,-143.5 72.8,-139.3M48.0,-154.5 51.2,-156.1 58.0,-155.3 61.0,-151.6M49.1,-160.7 55.3,-162.0 60.3,-161.1 63.0,-159.8 64.2,-154.9M55.3,-162.0 58.9,-162.8 62.1,-162.8 63.7,-169.0M63.0,-159.8 62.1,-162.8M27.3,-167.2 28.4,-176.3 27.8,-188.5 33.0,-199.1 36.4,-213.5 40.9,-216.6 46.6,-219.7 54.6,-216.6 58.7,-219.7 64.8,-222.9 66.7,-221.0 64.8,-213.5 68.2,-210.5 66.4,-201.8 68.2,-193.7 67.1,-186.0 71.7,-181.1 63.7,-174.0M55.1,-200.7 54.6,-210.5 46.6,-219.7M87.4,-122.8 90.3,-124.1 91.0,-124.8M91.0,-109.8 96.7,-108.9 102.1,-107.6 106.0,-104.9 110.1,-104.9M94.4,-103.9 99.0,-102.7 102.4,-103.3 106.0,-104.9M99.0,-102.7 101.9,-98.6 103.5,-96.5 105.8,-96.2 109.2,-94.7M101.9,-98.6 100.1,-91.3 96.5,-91.0 87.6,-90.2 83.3,-90.2 81.9,-87.6M100.1,-91.3 102.4,-86.5 104.6,-79.6 108.7,-74.2 110.6,-71.6M96.5,-91.0 93.7,-83.7 88.7,-77.7 86.5,-79.6 81.9,-83.7 81.7,-85.7M88.7,-77.7 84.2,-75.6 80.8,-75.6M88.7,-77.7 95.5,-74.2 101.7,-69.5 108.1,-69.0 109.2,-70.3M81.9,-83.7 81.0,-80.4M79.6,-70.3 81.9,-71.6 85.3,-71.6 86.5,-75.6M97.8,-38.5 105.8,-40.0 110.3,-41.6 118.3,-44.0 125.1,-46.5 126.7,-51.3 126.3,-55.0 128.1,-58.3M118.3,-44.0 118.8,-38.3M117.2,-57.0 119.4,-52.6 126.3,-53.0M105.8,-96.2 109.2,-98.3 111.2,-94.7M109.2,-94.7 110.1,-104.9M100.1,-91.3 104.6,-89.3 103.5,-96.5M122.4,-91.6 126.3,-93.3 130.8,-94.2 136.5,-90.7 139.2,-89.6 138.8,-83.7 138.3,-81.0 138.5,-75.6 140.4,-75.0 142.2,-70.0 144.2,-70.3 140.1,-64.3 143.8,-62.8 140.1,-59.3M136.5,-90.7 141.0,-86.5 146.7,-91.3 151.3,-91.9 154.7,-90.7 159.2,-93.3 162.7,-90.7 161.5,-87.9 162.7,-84.8 159.2,-82.3 157.7,-76.6 152.4,-75.0 150.8,-71.3 144.2,-70.3M162.7,-90.7 169.5,-91.3 170.6,-89.3 177.0,-86.5 180.9,-78.3 178.6,-74.8 182.0,-72.4 185.4,-72.7 190.0,-69.8 195.7,-66.4 200.4,-66.1 202.0,-64.3 209.3,-65.9 215.0,-69.5 220.7,-67.2 224.1,-60.8 222.3,-56.3 226.4,-51.8 230.2,-50.1 232.0,-52.3 236.6,-53.0 242.3,-52.1 245.7,-50.1M182.0,-72.4 186.5,-66.1 191.1,-64.9 200.4,-62.3 200.4,-66.1M202.0,-64.3 203.6,-63.3 209.3,-63.3 209.3,-65.9M200.4,-62.3 201.6,-59.3 200.4,-57.5 202.5,-53.8 202.2,-50.3M202.5,-60.8 210.0,-59.0 208.8,-55.0 210.0,-50.1M210.0,-50.1 211.6,-51.8 212.5,-56.3 215.2,-59.5 216.6,-63.3 220.7,-67.2M162.7,-84.8 168.3,-84.3 171.8,-78.3 169.5,-74.2 161.5,-66.4 160.4,-60.5 158.1,-57.0 155.4,-55.5M226.4,-51.8 228.2,-47.4 224.1,-45.7 221.8,-41.6 224.1,-37.6 225.2,-24.0 224.3,-22.9M228.2,-47.4 229.8,-45.2 232.0,-41.6 238.2,-40.4 240.0,-34.5 240.0,-32.9 234.3,-32.9 232.7,-28.0M240.0,-32.9 242.3,-33.3 244.6,-33.3 244.3,-37.6 242.3,-41.2 238.9,-43.6 236.6,-45.0 236.6,-48.6 233.9,-50.1 232.0,-52.3M242.3,-33.3 241.1,-29.8 239.6,-26.3 237.7,-24.0M230.2,-50.1 229.8,-45.2M227.7,-14.6 231.4,-13.2 232.3,-14.1M110.1,-104.9 113.8,-104.9M91.0,-109.8 86.5,-116.5M108.1,-108.6 106.9,-113.3M116.7,-113.3 122.8,-110.4 127.4,-114.9 133.1,-116.5 138.8,-113.0 141.0,-110.1 147.6,-110.7 151.3,-105.2 155.8,-101.5 159.2,-106.4 162.7,-107.9 167.2,-107.0 170.6,-107.9 179.7,-107.9 182.7,-114.9 187.7,-116.5 188.8,-122.1 194.5,-121.4 195.2,-128.2 199.1,-128.9M122.8,-103.3 127.4,-103.3 133.1,-107.9 136.5,-105.5 139.9,-103.0 142.2,-98.0 149.0,-94.5 151.3,-91.9M133.1,-107.9 127.4,-114.9M155.8,-101.5 152.4,-97.4 155.8,-95.0 159.2,-93.3M159.2,-106.4 158.1,-102.1 161.1,-101.8 166.1,-100.6 168.3,-98.0 167.2,-97.7 162.7,-98.0 159.2,-100.0 155.8,-101.5M167.2,-97.7 170.6,-99.4 174.0,-100.6 178.6,-103.9 182.5,-106.1 179.7,-107.9M169.5,-91.3 170.6,-95.0 167.2,-97.7M106.9,-113.3 110.3,-123.1 105.8,-127.5 108.1,-133.2 113.8,-137.1 121.7,-137.1 126.3,-134.2 133.1,-135.3 139.9,-134.6 138.8,-142.7 139.2,-146.5 147.9,-148.9 155.8,-151.2 161.5,-150.5 167.0,-146.5 171.8,-146.5 175.2,-142.0 182.0,-135.3 186.5,-134.6 193.4,-131.4 199.1,-128.9M199.1,-128.9 203.6,-131.0 209.3,-133.5 216.1,-131.7 222.9,-139.0 227.5,-138.2 233.2,-136.4 236.1,-132.4 242.3,-132.8 246.8,-129.3 251.4,-128.9 259.3,-132.4 265.0,-131.0 267.3,-130.3 271.9,-132.8 274.1,-141.6 277.6,-144.2 286.6,-142.0 290.1,-131.7 296.9,-127.5 303.7,-125.5 307.1,-126.2 306.0,-118.1 302.6,-114.9 298.0,-114.6 298.5,-107.9 297.3,-106.4M199.1,-128.9 205.9,-124.1 207.0,-118.1 211.6,-114.9 219.5,-107.9 227.5,-107.3 238.9,-104.3 244.6,-107.0 251.4,-107.3 254.8,-110.4 253.7,-113.9 260.5,-116.2 267.3,-120.1 271.9,-121.4 269.6,-124.8 265.0,-131.0M282.6,-99.1 286.6,-101.8 291.2,-105.5 295.1,-107.0 297.3,-106.4M286.9,-93.6 290.1,-94.5 292.1,-95.3M-3.9,-85.1 -3.4,-78.3 -8.2,-74.2 -19.8,-67.9 -19.8,-65.6 -30.0,-65.6M-19.8,-65.6 -10.9,-58.8 -14.8,-58.8 -27.3,-61.3 -27.3,-55.0 -29.6,-49.6 -38.7,-49.6M-19.8,-67.9 -19.8,-64.6M-27.3,-55.0 -27.3,-49.6M-10.9,-58.8 2.7,-48.9 9.6,-44.5 7.5,-43.8 9.6,-38.8 0.5,-34.5 -2.3,-34.5 -9.1,-35.7 -12.5,-35.7 -12.5,-38.1 -13.6,-58.5M-12.5,-35.7 -26.2,-35.7 -27.8,-33.8 -27.3,-29.8 -25.7,-27.5 -19.3,-27.5 -18.0,-23.3 -12.5,-23.8 -9.8,-21.9 -6.4,-21.9 -6.4,-25.2 0.0,-25.2 2.3,-29.6 6.4,-28.7 8.2,-26.8 8.4,-24.0 6.1,-20.6 6.1,-14.4M-27.8,-33.8 -35.3,-38.1 -37.5,-37.4M-27.3,-29.8 -31.2,-28.9 -38.0,-28.4M-25.7,-27.5 -30.0,-22.9M-19.3,-27.5 -23.9,-19.4 -26.2,-15.7M-18.0,-23.3 -18.0,-18.3 -19.3,-17.1 -17.1,-10.0M-6.4,-21.9 -7.3,-11.6M0.0,-25.2 1.4,-13.7M4.1,-25.2 3.6,-13.9M9.6,-38.8 17.1,-36.4 22.8,-34.5 30.9,-31.0 33.0,-29.8 33.7,-24.0 30.0,-18.9 27.3,-16.0 24.6,-14.6 20.0,-10.5M8.4,-24.0 9.1,-31.0 17.1,-31.0 30.9,-31.0M22.8,-55.0 21.6,-62.6 22.8,-72.9 26.2,-76.9M9.6,-44.5 21.6,-50.1 22.8,-55.0 26.2,-56.3 32.3,-52.6 35.9,-54.3 52.3,-45.2 54.6,-45.2 54.6,-46.5M56.9,-75.8 56.9,-51.3 84.2,-51.3M54.6,-46.5 56.9,-46.5 56.9,-51.3M35.9,-54.3 35.3,-47.7 31.4,-31.0M54.6,-45.2 54.6,-35.7 51.2,-32.2 51.2,-28.7 48.9,-26.3 51.9,-24.7 53.5,-19.9 55.7,-19.4 58.0,-23.8 61.4,-21.9 68.2,-22.4 75.1,-22.9 77.3,-19.4 75.5,-18.0 79.6,-13.7 81.4,-10.5M51.2,-28.7 42.1,-22.9 35.3,-17.1 33.0,-14.1 33.7,-9.1 36.9,-5.0 42.1,-10.2 51.2,-9.6 56.9,-11.4 62.6,-11.4 71.0,-8.7 77.1,-8.9 81.4,-10.5M33.0,-14.1 25.7,-14.8M36.9,-5.0 36.4,-3.4 33.0,-5.0 25.7,-5.2 22.3,-5.2M25.7,-5.2 25.7,-2.3 21.8,-2.3M33.0,-5.0 30.7,0.5 33.0,5.7 26.8,5.5 25.5,8.9M42.1,-10.2 40.5,1.1 37.1,4.1 36.4,8.0 28.4,11.4M28.0,13.7 37.5,17.1 39.8,18.3 48.9,16.7 50.0,25.2 54.6,25.6 54.6,29.8 50.0,29.8 50.0,37.4 53.5,41.2 47.3,41.6 31.8,40.2 26.8,40.0M71.0,-8.7 67.6,-8.4 67.1,2.3 66.0,6.6 66.2,10.2 69.4,18.9 65.3,19.4 64.8,26.3 67.8,27.7 62.6,27.5 58.0,25.6 54.6,25.6M67.1,2.3 77.1,2.3 85.5,6.8 89.2,10.7M77.1,-8.9 77.1,2.3M81.4,-10.5 86.5,-8.2 95.3,-9.1 93.3,3.4M67.8,27.7 69.4,18.9 74.8,21.3 78.5,26.3 91.9,23.8M62.6,27.5 57.6,41.2 63.7,38.1 69.2,35.9 75.1,32.2 74.8,21.3M69.2,35.9 75.1,39.3 74.6,48.9 71.2,52.3 66.9,51.8 63.7,53.0 60.3,58.0 58.5,60.8 52.3,59.5 45.5,58.3 45.5,51.3 47.8,51.3 47.8,42.1 53.5,41.2M45.5,58.3 45.5,67.4 37.5,67.9M71.2,52.3 72.8,57.5 74.8,63.3M80.3,32.9 80.8,38.1 75.1,39.3M84.2,-51.3 83.9,-41.6 87.6,-41.6 97.4,-28.7M75.5,-18.0 81.9,-28.7 83.0,-32.6 84.2,-39.3 87.6,-41.6M95.3,-9.1 101.2,-11.2 104.6,-14.8 109.2,-18.3 109.2,-25.2M95.3,-9.1 92.8,-18.3 97.4,-25.2 98.3,-26.6M95.1,-25.2 100.1,-20.6 109.2,-18.3M23.0,-82.1 18.9,-78.3 21.6,-72.1 22.8,-72.9M19.6,-90.4 18.7,-82.3 17.1,-80.2 20.5,-77.2M320.8,5.9 320.8,20.8M267.3,-9.6 263.4,-9.3 260.5,-3.4 254.8,-3.4 250.2,-2.0 249.3,-4.6M284.1,20.6 284.8,21.7" fill="none" stroke="#dcdcdc" stroke-width="0.75" stroke-linejoin="round"/></g></defs>
<use href="#w" transform="translate(5,239.8)"/>
<use href="#w" transform="translate(824,239.8)"/>
<use href="#w" transform="translate(1643,239.8)"/>
<circle cx="516.0" cy="76.0" r="4" fill="#5fb08e"/><path d="M563.1,100.5L563.10,96.30A4.2,4.2 0 0 1 566.07,97.53Z" fill="#2f84b6"/><path d="M563.1,100.5L566.07,97.53A4.2,4.2 0 0 1 567.24,101.23Z" fill="#5fb08e"/><path d="M563.1,100.5L567.24,101.23A4.2,4.2 0 0 1 565.80,103.72Z" fill="#eda877"/><path d="M563.1,100.5L565.80,103.72A4.2,4.2 0 0 1 559.29,102.27Z" fill="#b97176"/><path d="M563.1,100.5L559.29,102.27A4.2,4.2 0 0 1 558.92,100.87Z" fill="#c8d47f"/><path d="M563.1,100.5L558.92,100.87A4.2,4.2 0 0 1 562.01,96.44Z" fill="#7dbfbe"/><path d="M563.1,100.5L562.01,96.44A4.2,4.2 0 0 1 562.59,96.33Z" fill="#4c6d93"/><path d="M563.1,100.5L562.59,96.33A4.2,4.2 0 0 1 563.10,96.30Z" fill="#9aaab8"/><circle cx="624.6" cy="119.8" r="4" fill="#5fb08e"/><path d="M584.7,150.4L584.70,141.90A8.5,8.5 0 0 1 590.71,144.39Z" fill="#2f84b6"/><path d="M584.7,150.4L590.71,144.39A8.5,8.5 0 0 1 593.07,151.88Z" fill="#5fb08e"/><path d="M584.7,150.4L593.07,151.88A8.5,8.5 0 0 1 590.16,156.91Z" fill="#eda877"/><path d="M584.7,150.4L590.16,156.91A8.5,8.5 0 0 1 577.00,153.99Z" fill="#b97176"/><path d="M584.7,150.4L577.00,153.99A8.5,8.5 0 0 1 576.23,151.14Z" fill="#c8d47f"/><path d="M584.7,150.4L576.23,151.14A8.5,8.5 0 0 1 582.50,142.19Z" fill="#7dbfbe"/><path d="M584.7,150.4L582.50,142.19A8.5,8.5 0 0 1 583.66,141.96Z" fill="#4c6d93"/><path d="M584.7,150.4L583.66,141.96A8.5,8.5 0 0 1 584.70,141.90Z" fill="#9aaab8"/><path d="M657.7,137.2L657.70,131.20A6,6 0 0 1 661.94,132.96Z" fill="#2f84b6"/><path d="M657.7,137.2L661.94,132.96A6,6 0 0 1 663.61,138.24Z" fill="#5fb08e"/><path d="M657.7,137.2L663.61,138.24A6,6 0 0 1 661.56,141.80Z" fill="#eda877"/><path d="M657.7,137.2L661.56,141.80A6,6 0 0 1 652.26,139.74Z" fill="#b97176"/><path d="M657.7,137.2L652.26,139.74A6,6 0 0 1 651.72,137.72Z" fill="#c8d47f"/><path d="M657.7,137.2L651.72,137.72A6,6 0 0 1 656.15,131.40Z" fill="#7dbfbe"/><path d="M657.7,137.2L656.15,131.40A6,6 0 0 1 656.97,131.24Z" fill="#4c6d93"/><path d="M657.7,137.2L656.97,131.24A6,6 0 0 1 657.70,131.20Z" fill="#9aaab8"/><circle cx="465.0" cy="189.0" r="4" fill="#5fb08e"/><path d="M823.4,105.4L823.40,99.90A5.5,5.5 0 0 1 827.29,101.51Z" fill="#2f84b6"/><path d="M823.4,105.4L827.29,101.51A5.5,5.5 0 0 1 828.90,105.40Z" fill="#eda877"/><path d="M823.4,105.4L828.90,105.40A5.5,5.5 0 0 1 820.65,110.16Z" fill="#b97176"/><path d="M823.4,105.4L820.65,110.16A5.5,5.5 0 0 1 818.69,108.23Z" fill="#c8d47f"/><path d="M823.4,105.4L818.69,108.23A5.5,5.5 0 0 1 821.16,100.38Z" fill="#7dbfbe"/><path d="M823.4,105.4L821.16,100.38A5.5,5.5 0 0 1 822.54,99.97Z" fill="#4c6d93"/><path d="M823.4,105.4L822.54,99.97A5.5,5.5 0 0 1 823.40,99.90Z" fill="#9aaab8"/><path d="M885.8,107.8L885.80,101.80A6,6 0 0 1 890.04,103.56Z" fill="#2f84b6"/><path d="M885.8,107.8L890.04,103.56A6,6 0 0 1 891.80,107.80Z" fill="#eda877"/><path d="M885.8,107.8L891.80,107.80A6,6 0 0 1 882.80,113.00Z" fill="#b97176"/><path d="M885.8,107.8L882.80,113.00A6,6 0 0 1 880.66,110.89Z" fill="#c8d47f"/><path d="M885.8,107.8L880.66,110.89A6,6 0 0 1 883.36,102.32Z" fill="#7dbfbe"/><path d="M885.8,107.8L883.36,102.32A6,6 0 0 1 884.86,101.87Z" fill="#4c6d93"/><path d="M885.8,107.8L884.86,101.87A6,6 0 0 1 885.80,101.80Z" fill="#9aaab8"/><path d="M1100.8,157.7L1100.80,137.70A20,20 0 0 1 1114.94,143.56Z" fill="#2f84b6"/><path d="M1100.8,157.7L1114.94,143.56A20,20 0 0 1 1120.80,157.70Z" fill="#eda877"/><path d="M1100.8,157.7L1120.80,157.70A20,20 0 0 1 1090.80,175.02Z" fill="#b97176"/><path d="M1100.8,157.7L1090.80,175.02A20,20 0 0 1 1083.66,168.00Z" fill="#c8d47f"/><path d="M1100.8,157.7L1083.66,168.00A20,20 0 0 1 1092.67,139.43Z" fill="#7dbfbe"/><path d="M1100.8,157.7L1092.67,139.43A20,20 0 0 1 1097.67,137.95Z" fill="#4c6d93"/><path d="M1100.8,157.7L1097.67,137.95A20,20 0 0 1 1100.80,137.70Z" fill="#9aaab8"/><path d="M1141.7,152.4L1141.70,142.00A10.4,10.4 0 0 1 1149.05,145.05Z" fill="#2f84b6"/><path d="M1141.7,152.4L1149.05,145.05A10.4,10.4 0 0 1 1152.10,152.40Z" fill="#eda877"/><path d="M1141.7,152.4L1152.10,152.40A10.4,10.4 0 0 1 1136.50,161.41Z" fill="#b97176"/><path d="M1141.7,152.4L1136.50,161.41A10.4,10.4 0 0 1 1132.79,157.76Z" fill="#c8d47f"/><path d="M1141.7,152.4L1132.79,157.76A10.4,10.4 0 0 1 1137.47,142.90Z" fill="#7dbfbe"/><path d="M1141.7,152.4L1137.47,142.90A10.4,10.4 0 0 1 1140.07,142.13Z" fill="#4c6d93"/><path d="M1141.7,152.4L1140.07,142.13A10.4,10.4 0 0 1 1141.70,142.00Z" fill="#9aaab8"/><path d="M999.5,193.0L999.50,186.00A7,7 0 0 1 1004.45,188.05Z" fill="#2f84b6"/><path d="M999.5,193.0L1004.45,188.05A7,7 0 0 1 1006.50,193.00Z" fill="#eda877"/><path d="M999.5,193.0L1006.50,193.00A7,7 0 0 1 996.00,199.06Z" fill="#b97176"/><path d="M999.5,193.0L996.00,199.06A7,7 0 0 1 993.50,196.61Z" fill="#c8d47f"/><path d="M999.5,193.0L993.50,196.61A7,7 0 0 1 996.65,186.61Z" fill="#7dbfbe"/><path d="M999.5,193.0L996.65,186.61A7,7 0 0 1 998.40,186.09Z" fill="#4c6d93"/><path d="M999.5,193.0L998.40,186.09A7,7 0 0 1 999.50,186.00Z" fill="#9aaab8"/><path d="M1064.9,218.1L1064.90,213.60A4.5,4.5 0 0 1 1068.08,214.92Z" fill="#2f84b6"/><path d="M1064.9,218.1L1068.08,214.92A4.5,4.5 0 0 1 1069.40,218.10Z" fill="#eda877"/><path d="M1064.9,218.1L1069.40,218.10A4.5,4.5 0 0 1 1062.65,222.00Z" fill="#b97176"/><path d="M1064.9,218.1L1062.65,222.00A4.5,4.5 0 0 1 1061.04,220.42Z" fill="#c8d47f"/><path d="M1064.9,218.1L1061.04,220.42A4.5,4.5 0 0 1 1063.07,213.99Z" fill="#7dbfbe"/><path d="M1064.9,218.1L1063.07,213.99A4.5,4.5 0 0 1 1064.20,213.66Z" fill="#4c6d93"/><path d="M1064.9,218.1L1064.20,213.66A4.5,4.5 0 0 1 1064.90,213.60Z" fill="#9aaab8"/><path d="M819.0,221.0L819.00,216.50A4.5,4.5 0 0 1 822.18,217.82Z" fill="#2f84b6"/><path d="M819.0,221.0L822.18,217.82A4.5,4.5 0 0 1 823.50,221.00Z" fill="#eda877"/><path d="M819.0,221.0L823.50,221.00A4.5,4.5 0 0 1 816.75,224.90Z" fill="#b97176"/><path d="M819.0,221.0L816.75,224.90A4.5,4.5 0 0 1 815.14,223.32Z" fill="#c8d47f"/><path d="M819.0,221.0L815.14,223.32A4.5,4.5 0 0 1 817.17,216.89Z" fill="#7dbfbe"/><path d="M819.0,221.0L817.17,216.89A4.5,4.5 0 0 1 818.30,216.56Z" fill="#4c6d93"/><path d="M819.0,221.0L818.30,216.56A4.5,4.5 0 0 1 819.00,216.50Z" fill="#9aaab8"/><circle cx="824.0" cy="239.8" r="4" fill="#5fb08e"/><circle cx="950.0" cy="250.0" r="4" fill="#5fb08e"/><path d="M1067.1,254.2L1067.10,250.00A4.2,4.2 0 0 1 1070.07,251.23Z" fill="#2f84b6"/><path d="M1067.1,254.2L1070.07,251.23A4.2,4.2 0 0 1 1071.30,254.20Z" fill="#eda877"/><path d="M1067.1,254.2L1071.30,254.20A4.2,4.2 0 0 1 1065.00,257.84Z" fill="#b97176"/><path d="M1067.1,254.2L1065.00,257.84A4.2,4.2 0 0 1 1063.50,256.36Z" fill="#c8d47f"/><path d="M1067.1,254.2L1063.50,256.36A4.2,4.2 0 0 1 1065.39,250.36Z" fill="#7dbfbe"/><path d="M1067.1,254.2L1065.39,250.36A4.2,4.2 0 0 1 1066.44,250.05Z" fill="#4c6d93"/><path d="M1067.1,254.2L1066.44,250.05A4.2,4.2 0 0 1 1067.10,250.00Z" fill="#9aaab8"/><circle cx="878.2" cy="308.9" r="4" fill="#5fb08e"/><path d="M1177.6,326.1L1177.60,322.10A4,4 0 0 1 1180.43,323.27Z" fill="#2f84b6"/><path d="M1177.6,326.1L1180.43,323.27A4,4 0 0 1 1181.60,326.10Z" fill="#eda877"/><path d="M1177.6,326.1L1181.60,326.10A4,4 0 0 1 1175.60,329.56Z" fill="#b97176"/><path d="M1177.6,326.1L1175.60,329.56A4,4 0 0 1 1174.17,328.16Z" fill="#c8d47f"/><path d="M1177.6,326.1L1174.17,328.16A4,4 0 0 1 1175.97,322.45Z" fill="#7dbfbe"/><path d="M1177.6,326.1L1175.97,322.45A4,4 0 0 1 1176.97,322.15Z" fill="#4c6d93"/><path d="M1177.6,326.1L1176.97,322.15A4,4 0 0 1 1177.60,322.10Z" fill="#9aaab8"/>
</svg>
<div class="ctl" style="top:8px;height:42px"><div class="cb" style="top:4px"></div><div class="cb" style="top:23px"></div></div>
<div class="ctl" style="top:58px;height:23px"><div class="cb" style="top:4px"></div></div>
<svg style="position:absolute;left:12px;top:12px" width="15" height="70" viewBox="0 0 15 70">
<path d="M7.5,3.5V11.5M3.5,7.5H11.5" stroke="#111" stroke-width="2.6"/>
<path d="M3.5,26.5H11.5" stroke="#111" stroke-width="2.6"/>
<circle cx="7.5" cy="57.5" r="4.2" fill="none" stroke="#222" stroke-width="1.2"/><circle cx="7.5" cy="57.5" r="1.7" fill="#222"/>
<path d="M7.5,52V53.5M7.5,61.5V63M2,57.5H3.5M11.5,57.5H13" stroke="#222" stroke-width="1.2"/>
</svg>
</div>
<div style="position:absolute;left:1510px;top:678px;width:143px;height:21px;background:#fff;border:1px solid #c3cbd4;border-top:none;border-radius:0 0 4px 4px"></div>
<svg style="position:absolute;left:1518px;top:680px" width="75" height="14" viewBox="0 0 75 14" fill="none" stroke="#5c6773">
<circle cx="5.5" cy="6" r="3.3" stroke-width="1.3"/><path d="M8,8.5L10.5,11" stroke-width="1.8"/>
<path d="M26,2.5V10M22.7,7L26,10.3L29.3,7M21.5,12H30.5" stroke-width="1.2"/>
<path d="M46,5.5V11M44.5,11H47.5M44.8,5.5H46" stroke-width="1.6"/><circle cx="46" cy="2.6" r="1" fill="#5c6773" stroke="none"/>
<path d="M63,4A3.6,3.6 0 1 1 62.6,9.5" stroke-width="1.3"/><path d="M61,3L64.5,3.5L62,6.5Z" fill="#5c6773" stroke="none"/>
</svg>
<div class="a" style="left:1602px;top:679px;font-size:11.5px;color:#5c6773">&lt;1m ago</div>
</body></html>
